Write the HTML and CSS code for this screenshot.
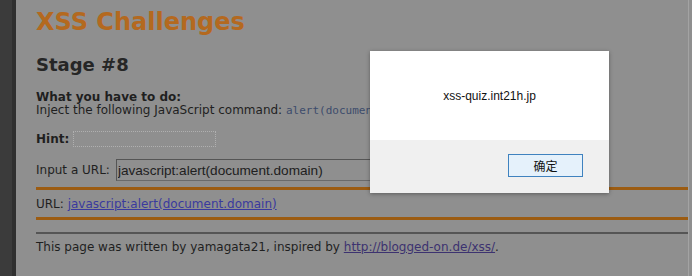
FILE: index.html
```html
<!DOCTYPE html>
<html>
<head>
<meta charset="utf-8">
<title>XSS Challenges</title>
<link rel="stylesheet" href="styles.css">
</head>
<body>
<div class="frame">
  <div class="strip"><div class="strip-a"></div><div class="strip-b"></div></div>
  <main class="page">
    <h1 class="title">XSS Challenges</h1>
    <h2 class="stage">Stage #8</h2>
    <div class="task">
      <b>What you have to do:</b><br>
      Inject the following JavaScript command: <code class="code">alert(document.domain)</code>
    </div>
    <div class="hint"><b>Hint:</b><span class="hintbox"></span></div>
    <form class="form">
      <div class="row"><span>Input a URL:</span><input class="url" type="text" value="javascript:alert(document.domain)"></div>
    </form>
    <div class="result">URL: <a class="link" href="#">javascript:alert(document.domain)</a></div>
    <div class="rule"></div>
    <p class="footer">This page was written by yamagata21, inspired by <a class="vlink" href="#">http://blogged-on.de/xss/</a>.</p>
  </main>
  <div class="edge"></div>
</div>
<div class="dialog">
  <div class="dialog-body">xss-quiz.int21h.jp</div>
  <div class="dialog-foot"><button class="ok" type="button">确定</button></div>
</div>
</body>
</html>
```
FILE: styles.css
```css
html, body {
  margin: 0;
  padding: 0;
  width: 692px;
  height: 276px;
  overflow: hidden;
  background: #8f8f8f;
}
.frame {
  display: flex;
  height: 276px;
}
.strip {
  display: flex;
  width: 16px;
  flex: none;
}
.strip-a { width: 12px; background: #3b3b3b; }
.strip-b { width: 4px; background: #2f2f2f; }
.page {
  flex: 1;
  padding: 8px 0 0 20px;
  font-family: "DejaVu Sans", Verdana, sans-serif;
  font-size: 12px;
  color: #1f1f1f;
}
.edge {
  width: 3px;
  flex: none;
  border-left: 1px solid #a3a3a3;
}
.title {
  margin: 0;
  font-size: 24px;
  line-height: 28px;
  font-weight: bold;
  color: #b4691f;
}
.stage {
  margin: 18px 0 0;
  font-size: 18px;
  line-height: 22px;
  font-weight: bold;
  color: #262626;
}
.task {
  margin-top: 15px;
  line-height: 13px;
}
.code {
  font-family: "DejaVu Sans Mono", monospace;
  font-size: 11px;
  color: #3d4c6c;
}
.hint {
  margin-top: 14px;
  display: flex;
  align-items: center;
  gap: 4px;
  height: 16px;
  line-height: 16px;
}
.hintbox {
  width: 141px;
  height: 14px;
  border: 1px dotted #b0b0b0;
}
.form {
  margin: 12px 0 0;
  padding-bottom: 6px;
  border-bottom: 3px solid #9c5c12;
}
.row {
  display: flex;
  align-items: center;
  gap: 6px;
  height: 22px;
}
.url {
  width: 440px;
  height: 22px;
  box-sizing: border-box;
  margin: 0;
  padding: 0 1px;
  background: #8f8f8f;
  border: 1px solid #6a6a6a;
  border-top-color: #555;
  border-left-color: #555;
  font-family: "Liberation Sans", Arial, sans-serif;
  font-size: 13.6px;
  color: #202020;
}
.result {
  padding: 6px 0 5px;
  line-height: 16px;
  border-bottom: 3px solid #9c5c12;
}
.link {
  color: #3a3a9e;
  text-decoration: underline;
}
.rule {
  margin-top: 12px;
  height: 2px;
  background: #555555;
}
.footer {
  margin: 5px 0 0;
  line-height: 16px;
}
.vlink {
  color: #3c3270;
}
.dialog {
  position: absolute;
  left: 370px;
  top: 51px;
  width: 239px;
  height: 142px;
  background: #f0f0f0;
  box-shadow: 0 1px 4px rgba(0,0,0,0.35);
  display: flex;
  flex-direction: column;
  font-family: "Liberation Sans", Arial, sans-serif;
}
.dialog-body {
  height: 89px;
  background: #ffffff;
  font-size: 12px;
  color: #111;
  text-align: center;
  padding-top: 38px;
  box-sizing: border-box;
}
.dialog-foot {
  flex: 1;
  display: flex;
  justify-content: flex-end;
  padding: 14px 26px 0 0;
}
.ok {
  width: 75px;
  height: 23px;
  margin: 0;
  padding: 0;
  background: #e5f1fb;
  border: 1px solid #3f82bf;
  font-family: "Noto Sans CJK SC", sans-serif;
  font-size: 12px;
  color: #111;
}
```
